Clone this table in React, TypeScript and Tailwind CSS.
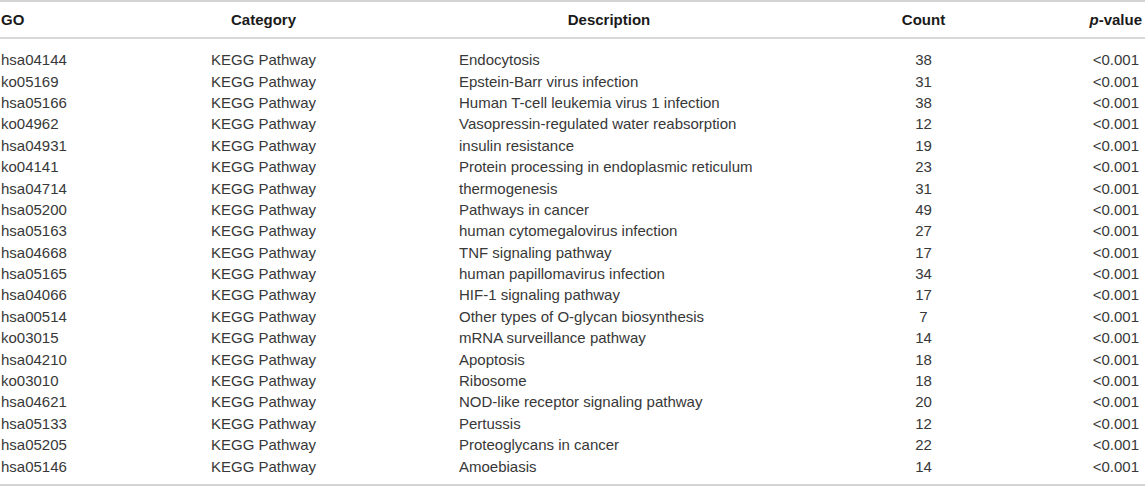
import React from "react";

const rows: [string, string, string, string][] = [
  ["hsa04144", "Endocytosis", "38", "<0.001"],
  ["ko05169", "Epstein-Barr virus infection", "31", "<0.001"],
  ["hsa05166", "Human T-cell leukemia virus 1 infection", "38", "<0.001"],
  ["ko04962", "Vasopressin-regulated water reabsorption", "12", "<0.001"],
  ["hsa04931", "insulin resistance", "19", "<0.001"],
  ["ko04141", "Protein processing in endoplasmic reticulum", "23", "<0.001"],
  ["hsa04714", "thermogenesis", "31", "<0.001"],
  ["hsa05200", "Pathways in cancer", "49", "<0.001"],
  ["hsa05163", "human cytomegalovirus infection", "27", "<0.001"],
  ["hsa04668", "TNF signaling pathway", "17", "<0.001"],
  ["hsa05165", "human papillomavirus infection", "34", "<0.001"],
  ["hsa04066", "HIF-1 signaling pathway", "17", "<0.001"],
  ["hsa00514", "Other types of O-glycan biosynthesis", "7", "<0.001"],
  ["ko03015", "mRNA surveillance pathway", "14", "<0.001"],
  ["hsa04210", "Apoptosis", "18", "<0.001"],
  ["ko03010", "Ribosome", "18", "<0.001"],
  ["hsa04621", "NOD-like receptor signaling pathway", "20", "<0.001"],
  ["hsa05133", "Pertussis", "12", "<0.001"],
  ["hsa05205", "Proteoglycans in cancer", "22", "<0.001"],
  ["hsa05146", "Amoebiasis", "14", "<0.001"],
];

const cols = "grid grid-cols-[211px_105px_143px_300px_329px_54px]";

export default function App() {
  return (
    <div
      className="w-[1145px] h-[487px] bg-white text-[15px] text-[#383838]"
      style={{ fontFamily: '"Liberation Sans", Arial, sans-serif' }}
    >
      <div className="border-t-2 border-[#d4d4d4]">
        <div className={`${cols} h-[37px] pt-[2px] items-center font-bold text-[#1a1a1a] border-b-2 border-[#d9d9d9]`}>
          <div className="pl-[1px]">GO</div>
          <div className="text-center">Category</div>
          <div></div>
          <div className="text-center">Description</div>
          <div className="text-center">Count</div>
          <div className="text-right whitespace-nowrap">
            <i>p</i>-value
          </div>
        </div>
        <div className="pt-[10px] pb-[7px] border-b-2 border-[#d4d4d4]">
          {rows.map((r) => (
            <div key={r[0]} className={`${cols} h-[21.4px] items-center leading-none`}>
              <div className="pl-[1px]">{r[0]}</div>
              <div className="whitespace-nowrap">KEGG Pathway</div>
              <div></div>
              <div className="whitespace-nowrap">{r[1]}</div>
              <div className="text-center">{r[2]}</div>
              <div className="text-right whitespace-nowrap pr-[3px]">{r[3]}</div>
            </div>
          ))}
        </div>
      </div>
    </div>
  );
}
